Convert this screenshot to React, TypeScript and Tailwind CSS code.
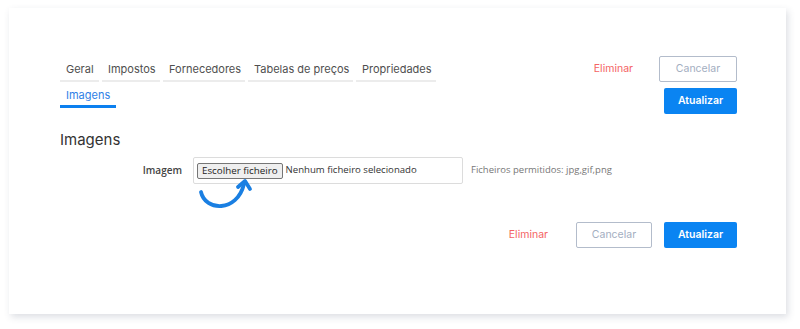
import React from "react";

const poppins = { fontFamily: '"Inter", "Noto Sans", sans-serif' };

const tabs: [string, string][] = [
  ["Geral", "w-[39px]"],
  ["Impostos", "w-[58px]"],
  ["Fornecedores", "w-[82px]"],
  ["Tabelas de preços", "w-[105px]"],
  ["Propriedades", "w-[80px]"],
];

export default function App() {
  return (
    <div className="w-[800px] h-[329px] bg-white pt-[8px] pl-[9px]" style={poppins}>
      <div className="w-[777px] h-[306px] bg-white shadow-[2px_3px_7px_rgba(60,70,100,0.18)] pt-[48px] pl-[51px] pr-[49px]">
        {/* header */}
        <div className="flex justify-between items-start">
          <div className="flex flex-wrap gap-x-[3px] w-[390px] text-[11px] text-[#4f4f4f]">
            {tabs.map(([t, w]) => (
              <div key={t} className={`${w} px-[6px] pt-[5px] pb-[3px] h-[26px] leading-[16px] border-b-2 border-[#ececec] whitespace-nowrap`}>
                {t}
              </div>
            ))}
            <div className="w-[56px] px-[6px] pt-[5px] pb-[2px] h-[26px] leading-[16px] border-b-[3px] border-[#0c80ef] text-[#2f7fe6]">
              Imagens
            </div>
          </div>
          <div className="flex flex-col items-end gap-[6px]">
            <div className="flex items-center gap-[26px]">
              <span className="text-[10.5px] text-[#f46464]">Eliminar</span>
              <button className="w-[78px] h-[26px] border border-[#b3bccb] rounded-[2px] text-[10.5px] text-[#a3aebf] bg-white">
                Cancelar
              </button>
            </div>
            <button className="w-[73px] h-[26px] rounded-[2px] bg-[#0a84f2] text-white text-[10.5px] font-semibold">
              Atualizar
            </button>
          </div>
        </div>

        {/* section */}
        <div className="mt-[16px] text-[15px] leading-[20px] text-[#333]">Imagens</div>

        <div className="mt-[7px] flex items-center" style={{ fontFamily: '"Open Sans", sans-serif' }}>
          <div className="w-[122px] text-right text-[10px] font-semibold text-[#444]">Imagem</div>
          <div className="relative ml-[11px] w-[270px] h-[27px] border border-[#dcdcdc] rounded-[2px] flex items-center pl-[3px]">
            <span className="h-[16px] px-[4px] border border-[#767676] bg-[#efefef] rounded-[2px] text-[9.8px] leading-[14px] text-[#222]">
              Escolher ficheiro
            </span>
            <span className="ml-[3px] text-[9.6px] text-[#333]">Nenhum ficheiro selecionado</span>
            <svg className="absolute left-[2px] top-[20px]" width="60" height="36" viewBox="0 0 60 36" fill="none">
              <path d="M5 14 C 9 33, 41 35, 48 6" stroke="#1a7fe2" strokeWidth="3.8" strokeLinecap="round" fill="none" />
              <path d="M42 9 L49 3 L54 11" stroke="#1a7fe2" strokeWidth="3.8" strokeLinecap="round" strokeLinejoin="round" fill="none" />
            </svg>
          </div>
          <div className="ml-[8px] text-[9.5px] text-[#777]">Ficheiros permitidos: jpg,gif,png</div>
        </div>

        <div className="mt-[38px] flex justify-end items-center">
          <span className="text-[10.5px] text-[#f46464]">Eliminar</span>
          <button className="ml-[28px] w-[76px] h-[26px] border border-[#b3bccb] rounded-[2px] text-[10.5px] text-[#a3aebf] bg-white">
            Cancelar
          </button>
          <button className="ml-[12px] w-[73px] h-[26px] rounded-[2px] bg-[#0a84f2] text-white text-[10.5px] font-semibold">
            Atualizar
          </button>
        </div>
      </div>
    </div>
  );
}
